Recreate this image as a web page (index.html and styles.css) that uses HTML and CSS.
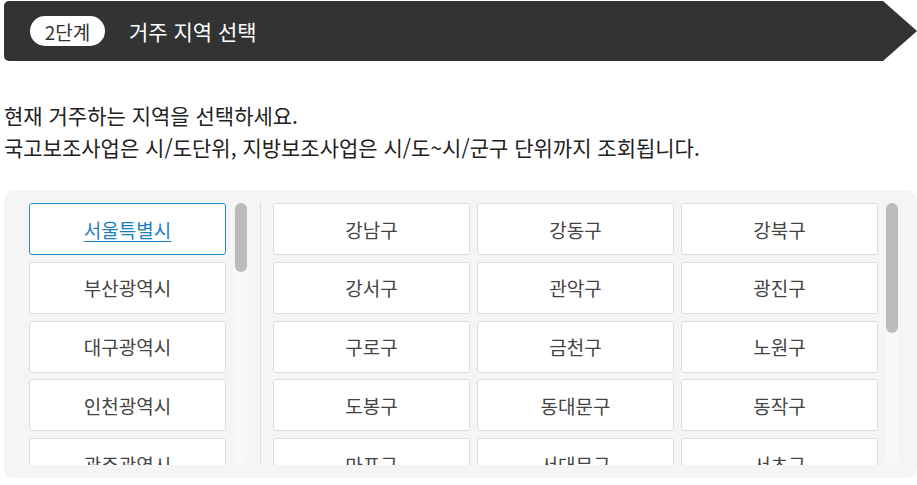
FILE: index.html
```html
<!DOCTYPE html>
<html lang="ko">
<head>
<meta charset="utf-8">
<title>2단계 거주 지역 선택</title>
<link rel="stylesheet" href="styles.css">
</head>
<body>
<div class="page">
  <div class="step-header">
    <span class="step-badge">2단계</span>
    <h2 class="step-title">거주 지역 선택</h2>
  </div>
  <div class="desc">
    <p>현재 거주하는 지역을 선택하세요.</p>
    <p>국고보조사업은 시/도단위, 지방보조사업은 시/도~시/군구 단위까지 조회됩니다.</p>
  </div>
  <div class="panel">
    <div class="col sido">
      <div class="viewport">
        <ul class="list">
          <li><a class="opt active">서울특별시</a></li>
          <li><a class="opt">부산광역시</a></li>
          <li><a class="opt">대구광역시</a></li>
          <li><a class="opt">인천광역시</a></li>
          <li><a class="opt">광주광역시</a></li>
          <li><a class="opt">대전광역시</a></li>
          <li><a class="opt">울산광역시</a></li>
          <li><a class="opt">세종특별자치시</a></li>
          <li><a class="opt">경기도</a></li>
          <li><a class="opt">강원특별자치도</a></li>
          <li><a class="opt">충청북도</a></li>
          <li><a class="opt">충청남도</a></li>
          <li><a class="opt">전북특별자치도</a></li>
          <li><a class="opt">전라남도</a></li>
          <li><a class="opt">경상북도</a></li>
          <li><a class="opt">경상남도</a></li>
          <li><a class="opt">제주특별자치도</a></li>
        </ul>
      </div>
      <div class="track"><div class="thumb thumb-sido"></div></div>
    </div>
    <div class="divider"></div>
    <div class="col sigungu">
      <div class="viewport">
        <ul class="grid">
          <li><a class="opt">강남구</a></li>
          <li><a class="opt">강동구</a></li>
          <li><a class="opt">강북구</a></li>
          <li><a class="opt">강서구</a></li>
          <li><a class="opt">관악구</a></li>
          <li><a class="opt">광진구</a></li>
          <li><a class="opt">구로구</a></li>
          <li><a class="opt">금천구</a></li>
          <li><a class="opt">노원구</a></li>
          <li><a class="opt">도봉구</a></li>
          <li><a class="opt">동대문구</a></li>
          <li><a class="opt">동작구</a></li>
          <li><a class="opt">마포구</a></li>
          <li><a class="opt">서대문구</a></li>
          <li><a class="opt">서초구</a></li>
          <li><a class="opt">성동구</a></li>
          <li><a class="opt">성북구</a></li>
          <li><a class="opt">송파구</a></li>
          <li><a class="opt">양천구</a></li>
          <li><a class="opt">영등포구</a></li>
          <li><a class="opt">용산구</a></li>
          <li><a class="opt">은평구</a></li>
          <li><a class="opt">종로구</a></li>
          <li><a class="opt">중구</a></li>
          <li><a class="opt">중랑구</a></li>
        </ul>
      </div>
      <div class="track"><div class="thumb thumb-sigungu"></div></div>
    </div>
  </div>
</div>
</body>
</html>
```

FILE: styles.css
```css
* { box-sizing: border-box; }
html, body { margin: 0; padding: 0; background: #fff; }
body {
  font-family: "Noto Sans CJK KR", "Noto Sans", sans-serif;
  color: #222;
  overflow: hidden;
}
.page { padding: 1px 0 0 4px; width: 917px; }

.step-header {
  height: 60px;
  background: #333;
  border-radius: 5px 0 0 5px;
  clip-path: polygon(0 0, calc(100% - 34px) 0, 100% 50%, calc(100% - 34px) 100%, 0 100%);
  display: flex;
  align-items: center;
  padding-left: 26px;
}
.step-badge {
  display: inline-flex;
  align-items: center;
  justify-content: center;
  height: 30px;
  width: 75px;
  background: #fff;
  color: #333;
  border-radius: 15px;
  font-size: 19px;
  line-height: 1;
}
.step-title {
  margin: 0 0 0 24px;
  color: #fff;
  font-size: 21px;
  font-weight: 400;
  line-height: 1;
}

.desc { margin-top: 38px; }
.desc p {
  margin: 0;
  font-size: 21px;
  line-height: 32px;
  color: #222;
}

.panel {
  margin-top: 27px;
  background: #f5f5f5;
  border-radius: 10px;
  padding: 13px 0 13px 25px;
  display: flex;
  height: 288px;
}
.col {
  display: flex;
  height: 262px;
}
.viewport {
  height: 262px;
  overflow: hidden;
}
.sido { gap: 9px; }
.sido .viewport { width: 197px; }
.sigungu { gap: 8px; }
.sigungu .viewport { width: 605px; }

.track {
  width: 12px;
  height: 262px;
  background: #f9f9f9;
  border-radius: 6px;
}
.thumb {
  width: 12px;
  background: #bbb;
  border-radius: 6px;
}
.thumb-sido { height: 69px; }
.thumb-sigungu { height: 130px; }

.divider {
  width: 1px;
  background: #ddd;
  margin: 0 12px 0 13px;
}

ul { list-style: none; margin: 0; padding: 0; }
.list {
  width: 197px;
  display: flex;
  flex-direction: column;
  gap: 6.75px;
}
.grid {
  width: 605px;
  display: grid;
  grid-template-columns: repeat(3, 197px);
  column-gap: 7px;
  row-gap: 6.75px;
}
.opt {
  display: flex;
  align-items: center;
  justify-content: center;
  height: 52px;
  background: #fff;
  border: 1px solid #ddd;
  border-radius: 3px;
  font-size: 19px;
  color: #444;
  cursor: pointer;
}
.opt.active {
  border-color: #2a8bcb;
  color: #1d7fc2;
  text-decoration: underline;
  text-underline-offset: 3px;
}
```
